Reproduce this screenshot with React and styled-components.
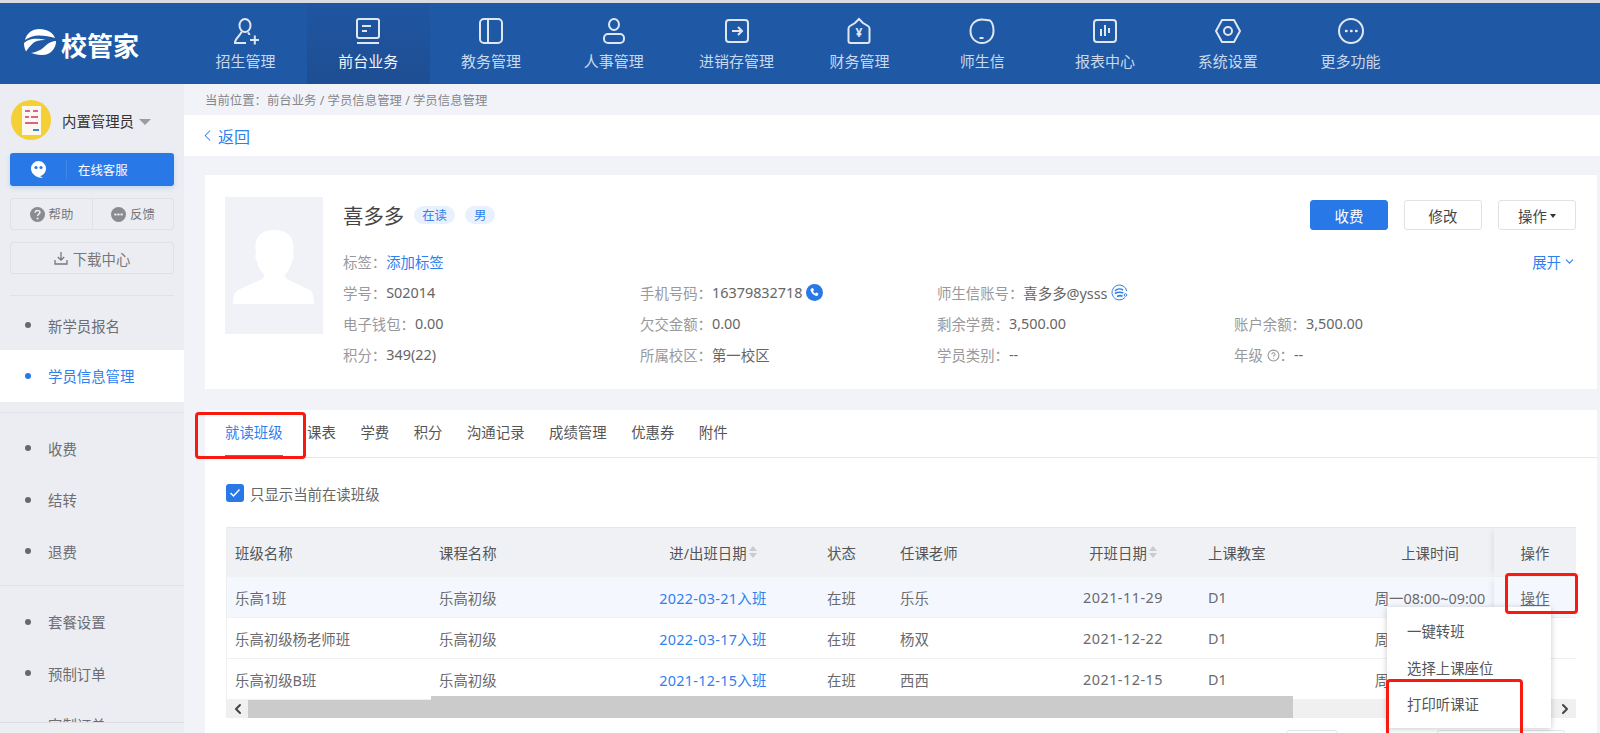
import React from "react";
import styled, { createGlobalStyle } from "styled-components";
import { ChevronLeft, ChevronDown, CircleHelp } from "lucide-react";

const GlobalStyle = createGlobalStyle`
  html, body {
    margin: 0;
    padding: 0;
    background: #f1f3f8;
  }
  * {
    box-sizing: border-box;
  }
  body {
    font-family: "Noto Sans", "Noto Sans CJK SC", sans-serif;
    font-size: 14.4px;
    color: #666;
  }
`;

const Page = styled.div`
  width: 1600px;
  height: 733px;
  overflow: hidden;
  display: flex;
  flex-direction: column;
  background: #f1f3f8;
`;

const TopBar = styled.header`
  height: 84px;
  flex: none;
  display: flex;
  background: #1f58a5;
  border-top: 3px solid #d9dde3;
`;

const LogoBox = styled.div`
  width: 184px;
  flex: none;
  padding: 26px 0 0 23px;
  display: flex;
  align-items: flex-start;
  gap: 5px;
  color: #fff;
`;

const LogoText = styled.span`
  font-size: 26px;
  line-height: 32px;
  font-weight: 700;
  font-family: "Noto Sans CJK SC", sans-serif;
`;

const NavItem = styled.div`
  width: 122.8px;
  height: 81px;
  flex: none;
  display: flex;
  flex-direction: column;
  align-items: center;
  padding-top: 14px;
  gap: 6px;
  font-size: 15px;
  line-height: 20px;
  color: ${(p) => (p.$active ? "#f2f6fc" : "#c9d8ec")};
  background: ${(p) => (p.$active ? "linear-gradient(#1f56a1, #1e4e93)" : "none")};
  svg {
    width: 28px;
    height: 28px;
    fill: none;
    stroke: #dfe7f3;
    stroke-width: 2;
  }
`;

const Body = styled.div`
  flex: 1;
  min-height: 0;
  display: flex;
`;

const Sidebar = styled.aside`
  width: 184px;
  flex: none;
  display: flex;
  flex-direction: column;
  background: #ebedf2;
`;

const UserRow = styled.div`
  display: flex;
  align-items: center;
  padding: 16px 0 0 11px;
  height: 56px;
  color: #333;
`;

const Avatar = styled.div`
  width: 40px;
  height: 40px;
  border-radius: 50%;
  overflow: hidden;
  margin-right: 11px;
  flex: none;
  svg {
    display: block;
  }
`;

const Caret = styled.i`
  width: 0;
  height: 0;
  margin: 3px 0 0 5px;
  border-style: solid;
  border-width: 6px 6px 0;
  border-color: #9a9ca2 transparent transparent;
`;

const ServiceButton = styled.div`
  margin: 13px 10px 0;
  height: 33px;
  display: flex;
  align-items: center;
  border-radius: 3px;
  color: #fff;
  font-size: 12.4px;
  background: #2878e8;
  box-shadow: 0 2px 5px rgba(40, 120, 232, 0.2);
`;

const ServiceIcon = styled.span`
  width: 57px;
  height: 19px;
  display: flex;
  justify-content: center;
  margin-right: 11px;
  border-right: 1px solid rgba(255, 255, 255, 0.12);
`;

const HelpRow = styled.div`
  margin: 12px 10px 0;
  height: 32px;
  display: grid;
  grid-template-columns: 81px 1fr;
  border: 1px solid #dfe1e6;
  border-radius: 3px;
`;

const HelpCell = styled.div`
  display: flex;
  align-items: center;
  justify-content: center;
  gap: 4px;
  font-size: 12.4px;
  color: #777;
  & + & {
    border-left: 1px solid #dfe1e6;
  }
`;

const DownloadRow = styled.div`
  margin: 12px 10px 0;
  height: 32px;
  display: flex;
  align-items: center;
  justify-content: center;
  gap: 5px;
  color: #777;
  border: 1px solid #dfe1e6;
  border-radius: 3px;
`;

const MenuDivider = styled.div`
  height: 1px;
  flex: none;
  margin: 21px 10px 0;
  background: #e0e2e7;
`;

const MenuScroll = styled.nav`
  height: 426px;
  flex: none;
  overflow: hidden;
`;

const MenuGroup = styled.div`
  padding: ${(p) => p.$pad};
  border-top: ${(p) => (p.$line ? "1px solid #e0e2e7" : "none")};
`;

const MenuItem = styled.div`
  height: ${(p) => p.$h || 51.5}px;
  display: flex;
  align-items: center;
  gap: 17px;
  padding-left: 25px;
  color: ${(p) => (p.$active ? "#2f7fee" : "#6d6e72")};
  background: ${(p) => (p.$active ? "#fff" : "none")};
  &::before {
    content: "";
    width: 6px;
    height: 6px;
    border-radius: 50%;
    background: ${(p) => (p.$active ? "#2878e8" : "#66686c")};
  }
`;

const SideFoot = styled.div`
  flex: 1;
  border-top: 1px solid #dcdee3;
  background: #eceef2;
`;

const Main = styled.main`
  flex: 1;
  min-width: 0;
  display: flex;
  flex-direction: column;
`;

const Crumb = styled.div`
  height: 31px;
  flex: none;
  padding-left: 21px;
  display: flex;
  align-items: center;
  font-size: 12.4px;
  color: #85878c;
`;

const BackBar = styled.div`
  height: 41px;
  flex: none;
  display: flex;
  align-items: center;
  gap: 1px;
  padding-left: 14px;
  background: #fff;
  font-size: 16px;
  color: #2f7fee;
  margin-bottom: 19px;
`;

const InfoCard = styled.section`
  height: 214px;
  flex: none;
  margin: 0 3px 21px 21px;
  padding: 22px 21px 0 20px;
  display: flex;
  gap: 20px;
  background: #fff;
`;

const Photo = styled.div`
  width: 98px;
  height: 137px;
  flex: none;
  background: #f0f2f7;
  svg {
    display: block;
  }
`;

const InfoBody = styled.div`
  flex: 1;
  min-width: 0;
`;

const NameRow = styled.div`
  height: 36px;
  margin-bottom: 13px;
  display: flex;
  align-items: center;
`;

const Name = styled.h2`
  margin: 0 10px 0 0;
  font-size: 20.4px;
  font-weight: 400;
  color: #444;
`;

const Pill = styled.span`
  height: 18px;
  padding: 0 ${(p) => (p.$narrow ? 9 : 8)}px;
  margin-right: 10px;
  display: flex;
  align-items: center;
  border-radius: 9px;
  font-size: 12.4px;
  color: #2f7fee;
  background: #e8f1fd;
`;

const Actions = styled.div`
  margin-left: auto;
  display: flex;
  gap: 16px;
`;

const Button = styled.div`
  width: 78px;
  height: 30px;
  display: flex;
  align-items: center;
  justify-content: center;
  gap: 3px;
  border-radius: 3px;
  color: ${(p) => (p.$primary ? "#fff" : "#444")};
  background: ${(p) => (p.$primary ? "#2878e8" : "#fff")};
  border: 1px solid ${(p) => (p.$primary ? "#2878e8" : "#e0e2e8")};
  &[data-caret]::after {
    content: "";
    margin-top: 1px;
    border-style: solid;
    border-width: 4px 3px 0;
    border-color: #333 transparent transparent;
  }
`;

const TagRow = styled.div`
  height: 31px;
  display: flex;
  align-items: center;
`;

const Label = styled.span`
  color: #98999d;
  svg {
    vertical-align: -1px;
  }
`;

const BlueLink = styled.span`
  color: #2f7fee;
`;

const DateLink = styled(BlueLink)`
  letter-spacing: 0.3px;
`;

const DateText = styled.span`
  letter-spacing: 0.5px;
`;

const Expand = styled.span`
  margin-left: auto;
  display: flex;
  align-items: center;
  gap: 2px;
  color: #2f7fee;
`;

const FieldGrid = styled.div`
  display: grid;
  grid-template-columns: repeat(4, 297px);
  grid-auto-rows: 31px;
`;

const Field = styled.div`
  display: flex;
  align-items: center;
  color: #666;
  > svg {
    margin-left: 3px;
  }
`;

const Panel = styled.section`
  flex: 1;
  min-height: 0;
  margin: 0 3px 0 21px;
  background: #fff;
`;

const Tabs = styled.div`
  height: 48px;
  padding-left: 20px;
  display: flex;
  gap: 24.5px;
  border-bottom: 1px solid #e6e7ec;
`;

const Tab = styled.div`
  height: 47px;
  line-height: 46px;
  color: ${(p) => (p.$active ? "#2f7fee" : "#555")};
  border-bottom: 2px solid ${(p) => (p.$active ? "#2f7fee" : "transparent")};
`;

const PanelBody = styled.div`
  padding: 26px 21px 0 21px;
`;

const Filter = styled.label`
  height: 18px;
  display: flex;
  align-items: center;
  gap: 6px;
  color: #666;
  margin-bottom: 25px;
`;

const CheckMark = styled.span`
  width: 18px;
  height: 18px;
  display: flex;
  align-items: center;
  justify-content: center;
  border-radius: 3px;
  background: #2878e8;
`;

const TableBox = styled.div`
  position: relative;
  height: 191px;
  overflow: hidden;
  border-left: 1px solid #efeff2;
  border-top: 1px solid #e6e7ec;
`;

const Row = styled.div`
  display: grid;
  grid-template-columns: 204px 176px 212px 73px 154px 154px 166px 128px 82px;
  height: ${(p) => (p.$head ? 49 : 41)}px;
  background: ${(p) => (p.$head ? "#f0f1f5" : p.$hover ? "#f4f8fe" : "#fff")};
  border-bottom: 1px solid #f1f1f3;
  color: ${(p) => (p.$head ? "#555" : "#6a6a6e")};
`;

const Cell = styled.div`
  display: flex;
  align-items: center;
  justify-content: ${(p) => (p.$center ? "center" : "flex-start")};
  padding: 0 8px;
  white-space: nowrap;
  gap: 2px;
  overflow: ${(p) => (p.$time ? "visible" : "hidden")};
`;

const ActionCell = styled(Cell)`
  position: relative;
  background: inherit;
  box-shadow: -5px 0 6px -3px rgba(0, 0, 0, 0.07);
`;

const Underlined = styled.span`
  text-decoration: underline;
`;

const Sort = styled.span`
  display: inline-flex;
  flex-direction: column;
  gap: 2px;
  &::before,
  &::after {
    content: "";
    border-style: solid;
    border-color: transparent;
  }
  &::before {
    border-width: 0 4.5px 5px;
    border-bottom-color: #c9cbd0;
  }
  &::after {
    border-width: 5px 4.5px 0;
    border-top-color: #c9cbd0;
  }
`;

const ScrollBar = styled.div`
  position: absolute;
  left: 0;
  right: 0;
  bottom: 0;
  height: 18px;
  background: #f0f0f0;
  display: flex;
  align-items: center;
  justify-content: space-between;
  padding: 0 3px;
  color: #444;
`;

const Thumb = styled.div`
  position: absolute;
  left: 21px;
  top: 0;
  width: 1045px;
  height: 18px;
  background: #cbcbcb;
  &::before {
    content: "";
    position: absolute;
    left: 183px;
    right: 0;
    top: -4px;
    height: 4px;
    background: #cbcbcb;
  }
`;

const ScrollArrow = styled(ChevronLeft)`
  position: relative;
  transform: ${(p) => (p.$right ? "rotate(180deg)" : "none")};
`;

const Pager = styled.div`
  display: flex;
  padding: 12px 9px 0 1060px;
`;

const PagerBox = styled.div`
  width: ${(p) => p.$w}px;
  height: 30px;
  margin-right: ${(p) => p.$gap || 0}px;
  border: 1px solid #e2e3e8;
  border-radius: 3px;
`;

const Dropdown = styled.div`
  position: absolute;
  left: 1387px;
  top: 607px;
  width: 164px;
  height: 121px;
  padding-top: 7px;
  background: #fff;
  box-shadow: 0 1px 6px rgba(0, 0, 0, 0.22);
  z-index: 5;
`;

const DropdownItem = styled.div`
  height: 36.5px;
  line-height: 36px;
  padding-left: 20px;
  color: #555;
`;

const RedBox = styled.div`
  position: absolute;
  left: ${(p) => p.$x}px;
  top: ${(p) => p.$y}px;
  width: ${(p) => p.$w}px;
  height: ${(p) => p.$h}px;
  border: 3px solid #f8190f;
  border-radius: 4px;
  z-index: 6;
`;

const Stage = styled.div`
  position: relative;
  width: 1600px;
  height: 733px;
  overflow: hidden;
`;

const navItems = [
  {
    label: "招生管理",
    icon: (
      <>
        <ellipse cx="14" cy="8.500" rx="5.500" ry="6.500" />
        <path d="M10.500 14.500c0 3-5.500 6-6.500 10.500v1h11" />
        <path d="M17 15.500c1 1 1.500 1.500 1.500 2.500M19 23h9.500M23.800 18.500v9" />
      </>
    ),
  },
  {
    label: "前台业务",
    active: true,
    icon: (
      <>
        <rect x="3" y="2" width="22" height="19" rx="2" />
        <path d="M8 9h9M8 14h5M3 26h22" />
      </>
    ),
  },
  {
    label: "教务管理",
    icon: (
      <>
        <rect x="3" y="2" width="22" height="24" rx="4" />
        <path d="M11 2v24" />
      </>
    ),
  },
  {
    label: "人事管理",
    icon: (
      <>
        <ellipse cx="14" cy="7.500" rx="5" ry="5.500" />
        <rect x="4" y="17" width="20" height="9" rx="4" />
      </>
    ),
  },
  {
    label: "进销存管理",
    icon: (
      <>
        <rect x="3" y="3" width="22" height="22" rx="3" />
        <path d="M9 14h10M15 10l4 4-4 4" />
      </>
    ),
  },
  {
    label: "财务管理",
    icon: (
      <>
        <path d="M14 2l4 4 5 3c1 .6 1.500 1.500 1.500 2.500V24c0 1-1 2-2 2h-17c-1 0-2-1-2-2V11.500c0-1 .5-1.900 1.500-2.500l5-3z" />
        <text x="14" y="20" fontSize="12" fontWeight="700" fill="#dfe7f3" stroke="none" textAnchor="middle">¥</text>
      </>
    ),
  },
  {
    label: "师生信",
    icon: (
      <>
        <path d="M22 3.500c3 2.500 3.500 6.500 3.500 10.500 0 7-5 12-11.500 12S2.500 21 2.500 14 7.500 2.500 14 2.500c3 0 5 .8 8 1z" />
        <path d="M11.500 21h4" />
      </>
    ),
  },
  {
    label: "报表中心",
    icon: (
      <>
        <rect x="3" y="3" width="22" height="22" rx="3" />
        <path d="M10 12v7M14 8v11M18 11v5" />
      </>
    ),
  },
  {
    label: "系统设置",
    icon: (
      <>
        <path d="M8 3h12l6 11-6 11H8L2 14z" strokeLinejoin="round" />
        <circle cx="14" cy="14" r="4" />
      </>
    ),
  },
  {
    label: "更多功能",
    icon: (
      <>
        <circle cx="14" cy="14" r="12" />
        <path d="M9 14h.6M14 14h.6M19 14h.6" strokeWidth="2.400" strokeLinecap="round" />
      </>
    ),
  },
];

const fields = [
  ["学号：", "S02014"],
  ["手机号码：", "16379832718", "phone"],
  ["师生信账号：", "喜多多@ysss", "logo"],
  null,
  ["电子钱包：", "0.00"],
  ["欠交金额：", "0.00"],
  ["剩余学费：", "3,500.00"],
  ["账户余额：", "3,500.00"],
  ["积分：", "349(22)"],
  ["所属校区：", "第一校区"],
  ["学员类别：", "--"],
  ["年级", "--", "help"],
];

const classes = [
  { name: "乐高1班", date: "2022-03-21入班", teacher: "乐乐", open: "2021-11-29", hover: true },
  { name: "乐高初级杨老师班", date: "2022-03-17入班", teacher: "杨双", open: "2021-12-22" },
  { name: "乐高初级B班", date: "2021-12-15入班", teacher: "西西", open: "2021-12-15" },
];

const LogoMark = () => (
  <svg width="33" height="27" viewBox="0 0 33 27" fill="#fff">
    <path d="M2 11C3.500 4.500 9 0 16.500 0 24 0 30 3.500 32 9c-5-1.500-10-2.500-16-2.500C10.500 6.500 6 8.500 2 11z" />
    <path d="M1 14c3-2.500 6-4 10-4.200 4-.2 8.500 .2 12 1.200-5-.3-9.500 .5-12.500 2.800-3 2.300-5 5.500-7.500 8.700C1.500 19.500 1 17 1 14z" />
    <path d="M33 12c.3 7-6 15-15 14-3.500-.3-7.500-1.200-10-2 5-1 9-2.500 12-5 3-2.500 6-6.500 13-7z" />
  </svg>
);

const AvatarArt = () => (
  <svg width="40" height="40" viewBox="0 0 40 40">
    <rect width="40" height="40" fill="#f4cf36" />
    <rect x="11" y="6" width="19" height="29" fill="#fbf9ee" />
    <path d="M14 11h5M22 11h5M14 17h4M20 17h7M14 23h13" stroke="#de5f95" strokeWidth="2" />
    <path d="M22 30h6" stroke="#3c86d8" strokeWidth="2" />
    <path d="M32 40l8-8v8z" fill="#555" />
  </svg>
);

const Silhouette = () => (
  <svg width="98" height="137" viewBox="0 0 98 137">
    <path
      d="M8 107c0-6 1-12 5-14l22-10c3-1 4-3 4-6-4-3-6-8-7-13-2-2-2-6-1-9-2-8 0-22 18-22s21 13 19 22c1 3 1 7-1 9-1 5-3 10-7 13 0 3 1 5 4 6l21 10c3 2 4 8 4 14z"
      fill="#fff"
    />
  </svg>
);

const ChatFace = () => (
  <svg width="17" height="19" viewBox="0 0 17 19">
    <path d="M8.500 1a7.500 7.500 0 0 1 7.500 7.500c0 4-3 7-6 7.500l3 2c-5 0-12-3-12-9.500A7.500 7.500 0 0 1 8.500 1z" fill="#fff" />
    <circle cx="6" cy="7.500" r="1.600" fill="#2878e8" />
    <circle cx="11" cy="7.500" r="1.600" fill="#2878e8" />
  </svg>
);

const HelpDot = () => (
  <svg width="15" height="15" viewBox="0 0 15 15">
    <circle cx="7.500" cy="7.500" r="7.500" fill="#8a8b8f" />
    <path d="M5.200 5.800c0-1.500 1-2.300 2.400-2.300s2.300.9 2.300 2c0 1.700-2.300 1.700-2.300 3.500" fill="none" stroke="#ebedf2" strokeWidth="1.600" />
    <circle cx="7.600" cy="11.400" r="1" fill="#ebedf2" />
  </svg>
);

const FeedbackDot = () => (
  <svg width="15" height="15" viewBox="0 0 15 15">
    <circle cx="7.500" cy="7.500" r="7.500" fill="#8a8b8f" />
    <path d="M4 7.500h.8M7.100 7.500h.8M10.200 7.500h.8" stroke="#ebedf2" strokeWidth="1.800" strokeLinecap="round" />
  </svg>
);

const DownloadIcon = () => (
  <svg width="14" height="14" viewBox="0 0 14 14" fill="none" stroke="#777" strokeWidth="1.300">
    <path d="M7 1v8M3.800 6L7 9.200 10.200 6M1 9v4h12V9" />
  </svg>
);

const PhoneBadge = () => (
  <svg width="17" height="17" viewBox="0 0 17 17">
    <circle cx="8.500" cy="8.500" r="8.500" fill="#2878e8" />
    <path
      d="M5.500 4.500l1.500-.5 1 2.300-1 .9c.4 1 1.200 1.800 2.200 2.300l1-1 2.300 1-.5 1.600c-.3.800-1 1-1.800.8-3-.8-5-3-5.700-5.600-.1-.8.300-1.500 1-1.800z"
      fill="#fff"
    />
  </svg>
);

const SchoolBadge = () => (
  <svg width="17" height="17" viewBox="0 0 17 17" fill="none" stroke="#2f7fee">
    <path d="M14 13.500A7.500 7.500 0 1 1 15.800 7" strokeWidth="1" />
    <path d="M4 7c2-2.500 5.500-2.500 8-1M3.800 9.500c3-1.500 6-1.500 8.500-.5M6 12.500c2-1 4-1 5.500-.3" strokeWidth="1.600" />
    <circle cx="14.500" cy="11" r="1.300" strokeWidth="1" />
  </svg>
);

const FieldExtra = ({ kind }) => {
  if (kind === "phone") return <PhoneBadge />;
  if (kind === "logo") return <SchoolBadge />;
  return null;
};

export default function App() {
  return (
    <Stage>
      <GlobalStyle />
      <Page>
        <TopBar>
          <LogoBox>
            <LogoMark />
            <LogoText>校管家</LogoText>
          </LogoBox>
          {navItems.map((item) => (
            <NavItem key={item.label} $active={item.active}>
              <svg viewBox="0 0 28 28">{item.icon}</svg>
              {item.label}
            </NavItem>
          ))}
        </TopBar>
        <Body>
          <Sidebar>
            <UserRow>
              <Avatar>
                <AvatarArt />
              </Avatar>
              内置管理员
              <Caret />
            </UserRow>
            <ServiceButton>
              <ServiceIcon>
                <ChatFace />
              </ServiceIcon>
              在线客服
            </ServiceButton>
            <HelpRow>
              <HelpCell>
                <HelpDot />
                帮助
              </HelpCell>
              <HelpCell>
                <FeedbackDot />
                反馈
              </HelpCell>
            </HelpRow>
            <DownloadRow>
              <DownloadIcon />
              下载中心
            </DownloadRow>
            <MenuDivider />
            <MenuScroll>
              <MenuGroup $pad="4px 0 10px">
                <MenuItem $h={50}>新学员报名</MenuItem>
                <MenuItem $active>学员信息管理</MenuItem>
              </MenuGroup>
              <MenuGroup $line $pad="10px 0 8px">
                <MenuItem>收费</MenuItem>
                <MenuItem>结转</MenuItem>
                <MenuItem>退费</MenuItem>
              </MenuGroup>
              <MenuGroup $line $pad="10px 0">
                <MenuItem>套餐设置</MenuItem>
                <MenuItem>预制订单</MenuItem>
                <MenuItem>定制订单</MenuItem>
              </MenuGroup>
            </MenuScroll>
            <SideFoot />
          </Sidebar>
          <Main>
            <Crumb>当前位置：前台业务 / 学员信息管理 / 学员信息管理</Crumb>
            <BackBar>
              <ChevronLeft size={19} strokeWidth={1.3} />
              返回
            </BackBar>
            <InfoCard>
              <Photo>
                <Silhouette />
              </Photo>
              <InfoBody>
                <NameRow>
                  <Name>喜多多</Name>
                  <Pill>在读</Pill>
                  <Pill $narrow>男</Pill>
                  <Actions>
                    <Button $primary>收费</Button>
                    <Button>修改</Button>
                    <Button data-caret>操作</Button>
                  </Actions>
                </NameRow>
                <TagRow>
                  <Label>标签：</Label>
                  <BlueLink>添加标签</BlueLink>
                  <Expand>
                    展开
                    <ChevronDown size={13} />
                  </Expand>
                </TagRow>
                <FieldGrid>
                  {fields.map((field, i) =>
                    field ? (
                      <Field key={i}>
                        <Label>
                          {field[0]}
                          {field[2] === "help" && (
                            <>
                              {" "}
                              <CircleHelp size={13} />：
                            </>
                          )}
                        </Label>
                        {field[1]}
                        <FieldExtra kind={field[2]} />
                      </Field>
                    ) : (
                      <span key={i} />
                    )
                  )}
                </FieldGrid>
              </InfoBody>
            </InfoCard>
            <Panel>
              <Tabs>
                <Tab $active>就读班级</Tab>
                <Tab>课表</Tab>
                <Tab>学费</Tab>
                <Tab>积分</Tab>
                <Tab>沟通记录</Tab>
                <Tab>成绩管理</Tab>
                <Tab>优惠券</Tab>
                <Tab>附件</Tab>
              </Tabs>
              <PanelBody>
                <Filter>
                  <CheckMark>
                    <svg width="12" height="10" viewBox="0 0 12 10" fill="none" stroke="#fff" strokeWidth="1.500">
                      <path d="M1.500 5l3 3 6-6.500" />
                    </svg>
                  </CheckMark>
                  只显示当前在读班级
                </Filter>
                <TableBox>
                  <Row $head>
                    <Cell>班级名称</Cell>
                    <Cell>课程名称</Cell>
                    <Cell $center>
                      进/出班日期
                      <Sort />
                    </Cell>
                    <Cell>状态</Cell>
                    <Cell>任课老师</Cell>
                    <Cell $center>
                      开班日期
                      <Sort />
                    </Cell>
                    <Cell>上课教室</Cell>
                    <Cell $center>上课时间</Cell>
                    <ActionCell $center>操作</ActionCell>
                  </Row>
                  {classes.map((c) => (
                    <Row key={c.name} $hover={c.hover}>
                      <Cell>{c.name}</Cell>
                      <Cell>乐高初级</Cell>
                      <Cell $center>
                        <DateLink>{c.date}</DateLink>
                      </Cell>
                      <Cell>在班</Cell>
                      <Cell>{c.teacher}</Cell>
                      <Cell $center>
                        <DateText>{c.open}</DateText>
                      </Cell>
                      <Cell>D1</Cell>
                      <Cell $center $time>
                        周一08:00~09:00
                      </Cell>
                      <ActionCell $center>
                        <Underlined>操作</Underlined>
                      </ActionCell>
                    </Row>
                  ))}
                  <ScrollBar>
                    <Thumb />
                    <ScrollArrow size={16} strokeWidth={3} />
                    <ScrollArrow size={16} strokeWidth={3} $right />
                  </ScrollBar>
                </TableBox>
                <Pager>
                  <PagerBox $w={52} $gap={99} />
                  <PagerBox $w={128} />
                </Pager>
              </PanelBody>
            </Panel>
          </Main>
        </Body>
      </Page>
      <Dropdown>
        <DropdownItem>一键转班</DropdownItem>
        <DropdownItem>选择上课座位</DropdownItem>
        <DropdownItem>打印听课证</DropdownItem>
      </Dropdown>
      <RedBox $x={195} $y={412} $w={111} $h={47} />
      <RedBox $x={1505} $y={573} $w={73} $h={41} />
      <RedBox $x={1386} $y={679} $w={137} $h={70} />
    </Stage>
  );
}
